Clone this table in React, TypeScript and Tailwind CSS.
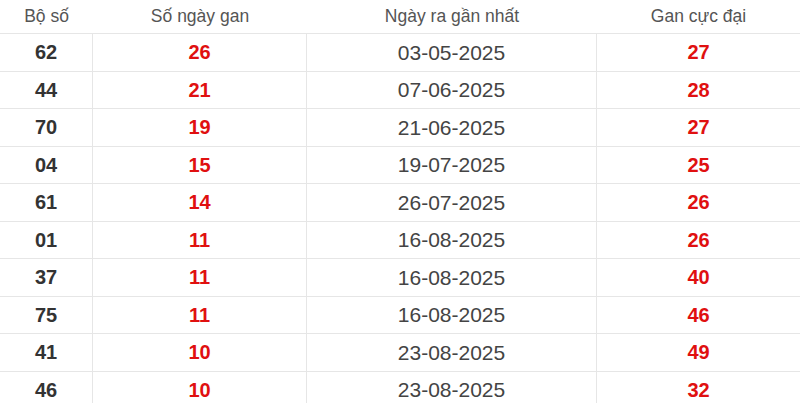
const rows = [
  ['62', '26', '03-05-2025', '27'],
  ['44', '21', '07-06-2025', '28'],
  ['70', '19', '21-06-2025', '27'],
  ['04', '15', '19-07-2025', '25'],
  ['61', '14', '26-07-2025', '26'],
  ['01', '11', '16-08-2025', '26'],
  ['37', '11', '16-08-2025', '40'],
  ['75', '11', '16-08-2025', '46'],
  ['41', '10', '23-08-2025', '49'],
  ['46', '10', '23-08-2025', '32'],
]

export default function App() {
  return (
    <div className="w-[800px] h-[403px] overflow-hidden bg-white font-['Liberation_Sans',Arial,sans-serif]">
      <div className="grid grid-cols-[93px_214px_290px_1fr]">
        {/* Header */}
        <div className="h-[34px] flex items-center justify-center border-b border-[#e6e6e6] text-[17.5px] text-[#555]">Bộ số</div>
        <div className="h-[34px] flex items-center justify-center border-b border-[#e6e6e6] text-[17.5px] text-[#555]">Số ngày gan</div>
        <div className="h-[34px] flex items-center justify-center border-b border-[#e6e6e6] text-[17.5px] text-[#555]">Ngày ra gần nhất</div>
        <div className="h-[34px] flex items-center justify-center border-b border-[#e6e6e6] text-[17.5px] text-[#555]">Gan cực đại</div>

        {rows.map(r => (
          <div key={r[0]} className="contents">
            <div className="h-[37.5px] flex items-center justify-center border-b border-r border-[#e6e6e6] text-[20px] font-bold text-[#333]">{r[0]}</div>
            <div className="h-[37.5px] flex items-center justify-center border-b border-r border-[#e6e6e6] text-[20px] font-bold text-[#e01010]">{r[1]}</div>
            <div className="h-[37.5px] flex items-center justify-center border-b border-r border-[#e6e6e6] text-[21px] text-[#444]">{r[2]}</div>
            <div className="h-[37.5px] flex items-center justify-center border-b border-[#e6e6e6] text-[20px] font-bold text-[#e01010]">{r[3]}</div>
          </div>
        ))}
      </div>
    </div>
  )
}
